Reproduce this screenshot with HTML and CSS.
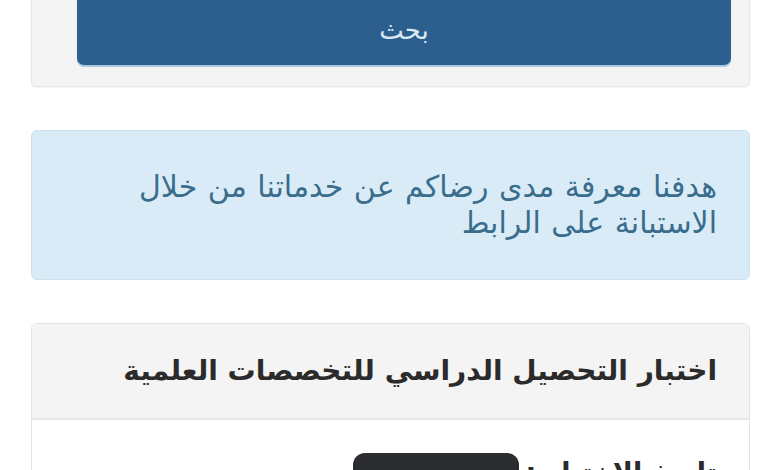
FILE: index.html
```html
<!DOCTYPE html>
<html lang="ar" dir="rtl">
<head>
<meta charset="utf-8">
<link rel="stylesheet" href="styles.css">
</head>
<body>
<div class="page">
  <div class="well">
    <div class="btn">بحث</div>
  </div>
  <div class="alert">هدفنا معرفة مدى رضاكم عن خدماتنا من خلال الاستبانة على الرابط</div>
  <div class="panel">
    <div class="panel-heading">اختبار التحصيل الدراسي للتخصصات العلمية</div>
    <div class="panel-body">
      <span class="label">تاريخ الاختبار :</span>
      <span class="badge"></span>
    </div>
  </div>
</div>
</body>
</html>
```
FILE: styles.css
```css
html, body {
  margin: 0;
  padding: 0;
  background: #ffffff;
  overflow: hidden;
}
body {
  width: 780px;
  height: 470px;
  font-family: "DejaVu Sans", sans-serif;
}
.page {
  padding: 0 30px 0 31px;
}
.well {
  margin-top: -21px;
  background: #f4f4f4;
  border: 1px solid #e6e6e6;
  border-top: none;
  border-radius: 0 0 5px 5px;
  padding: 0 18px 21px 45px;
  box-shadow: 0 1px 2px rgba(0,0,0,0.05);
}
.btn {
  background: #2c5f8e;
  color: #dbe9f5;
  border-radius: 0 0 7px 7px;
  box-shadow: 0 2px 1px #a9c6df;
  text-align: center;
  font-size: 26px;
  line-height: 40px;
  padding: 31px 0 15px;
}
.alert {
  margin-top: 43px;
  background: #d8ebf7;
  border: 1px solid #cbe2ef;
  border-radius: 6px;
  color: #3a6d8c;
  font-size: 30px;
  line-height: 36px;
  word-spacing: 1px;
  padding: 38px 32px 38px 100px;
  height: 72px;
}
.panel {
  margin-top: 43px;
  border: 1px solid #e3e3e3;
  border-radius: 6px 6px 0 0;
  height: 200px;
}
.panel-heading {
  background: #f4f4f4;
  border-bottom: 2px solid #e6e6e6;
  border-radius: 6px 6px 0 0;
  color: #2b2b2b;
  font-weight: bold;
  font-size: 28px;
  line-height: 36px;
  padding: 29px 32px 29px 20px;
}
.panel-body {
  display: flex;
  align-items: flex-start;
  gap: 6px;
  padding: 33px 32px 0 20px;
}
.label {
  font-weight: bold;
  font-size: 27px;
  line-height: 40px;
  color: #2b2b2b;
}
.badge {
  display: block;
  width: 166px;
  height: 40px;
  background: #2a2c2f;
  border-radius: 12px;
}
```
